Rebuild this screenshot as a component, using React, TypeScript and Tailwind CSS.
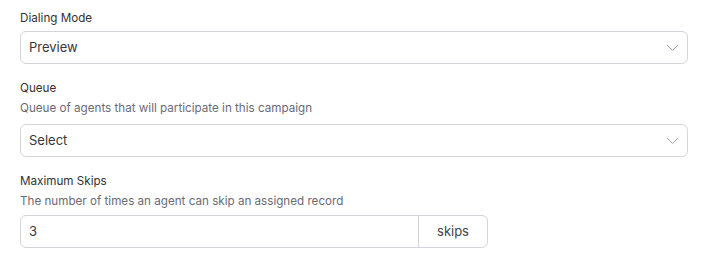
import React from 'react';

function Chevron() {
  return (
    <svg width="13" height="8" viewBox="0 0 13 8" fill="none" className="text-[#a3a3ae]">
      <path d="M1 1l5.5 5.5L12 1" stroke="currentColor" strokeWidth="1" />
    </svg>
  );
}

function SelectBox({ value }: { value: string }) {
  return (
    <div className="flex h-[33px] w-[668px] items-center justify-between rounded-md border border-[#d4d4dc] bg-white pl-[8px] pr-[8px]">
      <span className="text-[13px] text-[#383838]">{value}</span>
      <Chevron />
    </div>
  );
}

export default function App() {
  return (
    <div className="min-h-screen bg-white px-5 pt-[8px]" style={{ fontFamily: 'Inter, sans-serif' }}>
      <div className="text-[11.65px] leading-[20px] text-[#333]">Dialing Mode</div>
      <div className="mt-[3px]">
        <SelectBox value="Preview" />
      </div>

      <div className="mt-[14px] text-[11.65px] leading-[20px] text-[#333]">Queue</div>
      <div className="text-[11.65px] leading-[20px] text-[#6b6b76]">Queue of agents that will participate in this campaign</div>
      <div className="mt-[6px]">
        <SelectBox value="Select" />
      </div>

      <div className="mt-[14px] text-[11.65px] leading-[20px] text-[#333]">Maximum Skips</div>
      <div className="text-[11.65px] leading-[20px] text-[#6b6b76]">The number of times an agent can skip an assigned record</div>
      <div className="mt-[4px] flex h-[33px] w-[468px] rounded-md border border-[#d4d4dc]">
        <div className="flex flex-1 items-center pl-[8px] text-[13px] text-[#383838]">3</div>
        <div className="flex w-[69px] items-center justify-center border-l border-[#d4d4dc] text-[13px] text-[#444]">skips</div>
      </div>
    </div>
  );
}
